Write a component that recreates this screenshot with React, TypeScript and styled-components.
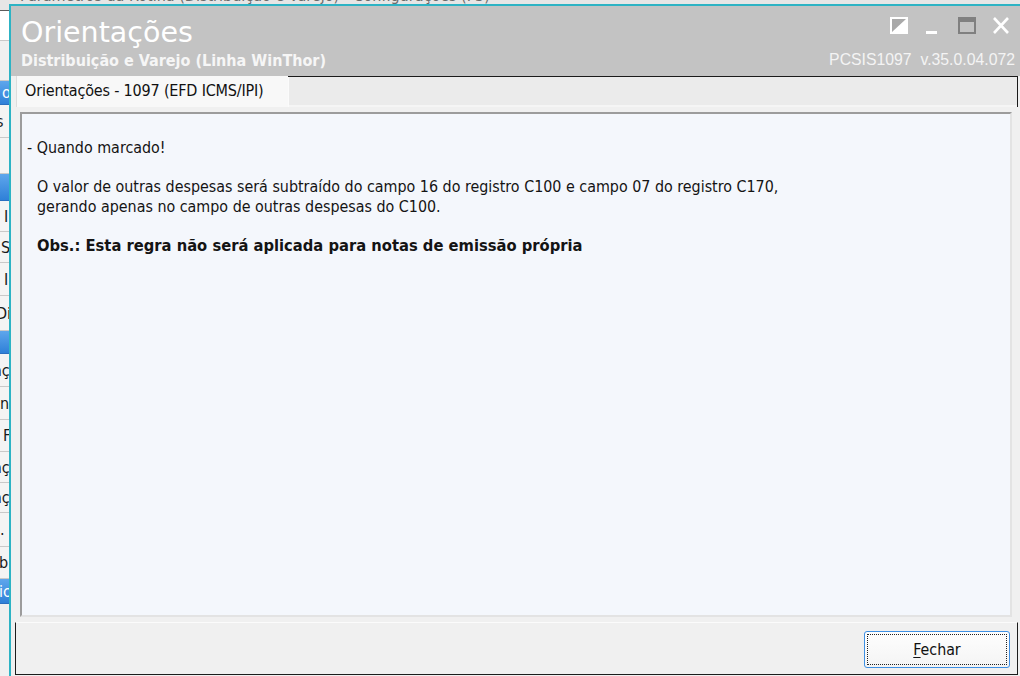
import React from "react";
import styled, { createGlobalStyle } from "styled-components";

const Global = createGlobalStyle`
  html, body { margin: 0; padding: 0; }
  body {
    width: 1020px;
    height: 676px;
    overflow: hidden;
    background: #eeeeee;
    font-family: "DejaVu Sans", sans-serif;
  }
`;

const UI_FONT = `"DejaVu Sans Condensed", "DejaVu Sans", sans-serif`;

const Desktop = styled.div`
  position: relative;
  width: 1020px;
  height: 676px;
  overflow: hidden;
  background: #eeeeee;
`;

/* ---------- background application (mostly hidden) ---------- */
const BgApp = styled.div`
  display: flex;
  flex-direction: column;
  width: 100%;
  height: 100%;
  background: #f0f0f0;
  font: 16px ${UI_FONT};
`;

const BgTitle = styled.div`
  height: 10px;
  flex: none;
  border-bottom: 1px solid #5c5c5c;
  background: #e6e6e6;
  overflow: hidden;
  padding-left: 20px;
`;

const BgTitleText = styled.span`
  display: block;
  margin-top: -12px;
  line-height: 16px;
  white-space: nowrap;
  color: #6a6a6a;
`;

type RowKind = "white" | "plain" | "header" | "item";

const BgRow = styled.div<{ $h: number; $kind: RowKind; $indent?: number }>`
  flex: none;
  box-sizing: border-box;
  height: ${(p) => p.$h}px;
  line-height: ${(p) => p.$h}px;
  white-space: nowrap;
  overflow: hidden;
  text-indent: ${(p) => p.$indent ?? 0}px;
  color: ${(p) => (p.$kind === "header" ? "#ffffff" : "#1a1a1a")};
  background: ${(p) =>
    p.$kind === "header"
      ? "linear-gradient(#5ea6ec, #2f80d8)"
      : p.$kind === "white"
      ? "#ffffff"
      : p.$kind === "plain"
      ? "#f0f0f0"
      : "#f4f4f4"};
  border-bottom: 1px solid
    ${(p) => (p.$kind === "header" ? "#2a6fc0" : "#c9c9c9")};
`;

/* ---------- dialog window ---------- */
const Dialog = styled.section`
  position: absolute;
  left: 9px;
  top: 4px;
  right: 0;
  bottom: 0;
  display: flex;
  flex-direction: column;
  border-top: 2px solid #2db3c4;
  border-left: 2px solid #2db3c4;
  background: #f0f0f0;
`;

const Header = styled.header`
  height: 70px;
  flex: none;
  display: flex;
  justify-content: space-between;
  background: #c3c3c3;
  color: #ffffff;
`;

const TitleBlock = styled.div`
  display: flex;
  flex-direction: column;
  padding: 10px 0 0 10px;
`;

const Title = styled.h1`
  margin: 0;
  font: 400 28.5px/34px "DejaVu Sans", sans-serif;
  color: #ffffff;
`;

const Subtitle = styled.div`
  margin-top: 2px;
  font: 700 16px/18px ${UI_FONT};
  color: #f6f6f6;
  white-space: nowrap;
`;

const ControlBlock = styled.div`
  display: flex;
  flex-direction: column;
  align-items: flex-end;
  padding: 11px 5px 0 0;
`;

const WindowButtons = styled.div`
  display: flex;
  gap: 16px;
  height: 17px;
  margin-right: 5px;
  margin-bottom: 17px;
`;

const WinIcon = styled.svg`
  display: block;
  width: 18px;
  height: 17px;
`;

const Version = styled.div`
  font: 15.8px/18px "Liberation Sans", Arial, sans-serif;
  color: #f4f4f4;
  white-space: pre;
`;

const TabBar = styled.div`
  height: 31px;
  flex: none;
  display: flex;
  padding: 0 2px 0 5px;
`;

const Tab = styled.div`
  width: 272px;
  box-sizing: border-box;
  display: flex;
  align-items: center;
  padding: 0 0 2px 8px;
  background: #f8f8f8;
  border-left: 1px solid #dddddd;
  font: 16px ${UI_FONT};
  letter-spacing: -0.18px;
  color: #111111;
  white-space: nowrap;
`;

const TabFiller = styled.div`
  flex: 1;
  border-top: 1px solid #1a1a1a;
  border-right: 1px solid #1a1a1a;
  background: #ebebeb;
  box-shadow: inset 1px 0 #fbfbfb, inset 0 -2px #f5f5f5;
`;

const ContentBox = styled.div`
  flex: 1;
  min-height: 0;
  margin: 5px 8px 5px 9px;
  padding: 24px 0 0 5px;
  border-top: 2px solid #9c9c9c;
  border-left: 2px solid #9c9c9c;
  border-right: 2px solid #e3e3e3;
  border-bottom: 2px solid #e3e3e3;
  background: #f4f7fc;
  color: #141414;
  font: 15.9px/19.7px ${UI_FONT};
`;

const Line = styled.p<{ $indent?: boolean; $gap?: boolean; $bold?: boolean }>`
  margin: ${(p) => (p.$gap ? "19.7px" : "0")} 0 0 0;
  padding-left: ${(p) => (p.$indent ? "10px" : "0")};
  font-weight: ${(p) => (p.$bold ? 700 : 400)};
  font-size: ${(p) => (p.$bold ? "16.4px" : "inherit")};
  white-space: nowrap;
`;

const Footer = styled.footer`
  height: 53px;
  flex: none;
  box-sizing: border-box;
  margin: 0 2px 1px 4px;
  padding: 8px 7px 0 0;
  display: flex;
  justify-content: flex-end;
  align-items: flex-start;
  border: 1px solid #1c1c1c;
  border-top-color: #fbfbfb;
  background: #f0f0f0;
`;

const Button = styled.button`
  position: relative;
  width: 146px;
  height: 37px;
  border: 1px solid #3d8fe3;
  border-radius: 3px;
  background: linear-gradient(#fefefe, #f4f4f4);
  font: 15.8px ${UI_FONT};
  color: #111111;
  padding: 0;
  &::after {
    content: "";
    position: absolute;
    inset: 2px;
    border: 1px dotted #222222;
  }
  u {
    text-decoration: underline;
    text-underline-offset: 2px;
  }
`;

const bgRows: { h: number; kind: RowKind; text?: string; indent?: number }[] = [
  { h: 30, kind: "white" },
  { h: 40, kind: "plain" },
  { h: 24, kind: "header", text: "o", indent: 2 },
  { h: 33, kind: "item", text: "s", indent: -4 },
  { h: 36, kind: "item" },
  { h: 27, kind: "header" },
  { h: 31, kind: "item", text: "I", indent: 4 },
  { h: 31, kind: "item", text: "S", indent: 1 },
  { h: 33, kind: "item", text: "I", indent: 4 },
  { h: 35, kind: "item", text: "Di", indent: -4 },
  { h: 23, kind: "header" },
  { h: 33, kind: "item", text: "aç", indent: -7 },
  { h: 33, kind: "item", text: "n", indent: 0 },
  { h: 32, kind: "item", text: "F", indent: 3 },
  { h: 31, kind: "item", text: "aç", indent: -7 },
  { h: 30, kind: "item", text: "aç", indent: -7 },
  { h: 34, kind: "item", text: ".", indent: 0 },
  { h: 32, kind: "item", text: "b", indent: -1 },
  { h: 25, kind: "header", text: "ic", indent: -1 },
];

export default function App() {
  return (
    <Desktop>
      <Global />
      <BgApp>
        <BgTitle>
          <BgTitleText>Parâmetros da Rotina (Distribuição e Varejo) - Configurações (F3)</BgTitleText>
        </BgTitle>
        {bgRows.map((r, i) => (
          <BgRow key={i} $h={r.h} $kind={r.kind} $indent={r.indent}>
            {r.text ?? ""}
          </BgRow>
        ))}
      </BgApp>

      <Dialog>
        <Header>
          <TitleBlock>
            <Title>Orientações</Title>
            <Subtitle>Distribuição e Varejo (Linha WinThor)</Subtitle>
          </TitleBlock>
          <ControlBlock>
            <WindowButtons>
              <WinIcon viewBox="0 0 18 17">
                <rect x="1" y="1" width="16" height="15" fill="#a9a9a9" stroke="#ffffff" strokeWidth="2" />
                <polygon points="16,2 16,15 2,15" fill="#ffffff" />
              </WinIcon>
              <WinIcon viewBox="0 0 18 17">
                <rect x="2" y="14" width="11" height="3" fill="#ffffff" />
              </WinIcon>
              <WinIcon viewBox="0 0 18 17">
                <rect x="1" y="1" width="16" height="15" fill="none" stroke="#808080" strokeWidth="2" />
                <rect x="1" y="1" width="16" height="4" fill="#808080" />
              </WinIcon>
              <WinIcon viewBox="0 0 18 17">
                <path d="M2 1 L16 16 M16 1 L2 16" stroke="#ffffff" strokeWidth="2.6" />
              </WinIcon>
            </WindowButtons>
            <Version>{"PCSIS1097  v.35.0.04.072"}</Version>
          </ControlBlock>
        </Header>

        <TabBar>
          <Tab>Orientações - 1097 (EFD ICMS/IPI)</Tab>
          <TabFiller />
        </TabBar>

        <ContentBox>
          <Line>- Quando marcado!</Line>
          <Line $indent $gap>
            O valor de outras despesas será subtraído do campo 16 do registro C100 e campo 07 do registro C170,
          </Line>
          <Line $indent>gerando apenas no campo de outras despesas do C100.</Line>
          <Line $indent $gap $bold>
            Obs.: Esta regra não será aplicada para notas de emissão própria
          </Line>
        </ContentBox>

        <Footer>
          <Button type="button">
            <u>F</u>echar
          </Button>
        </Footer>
      </Dialog>
    </Desktop>
  );
}
